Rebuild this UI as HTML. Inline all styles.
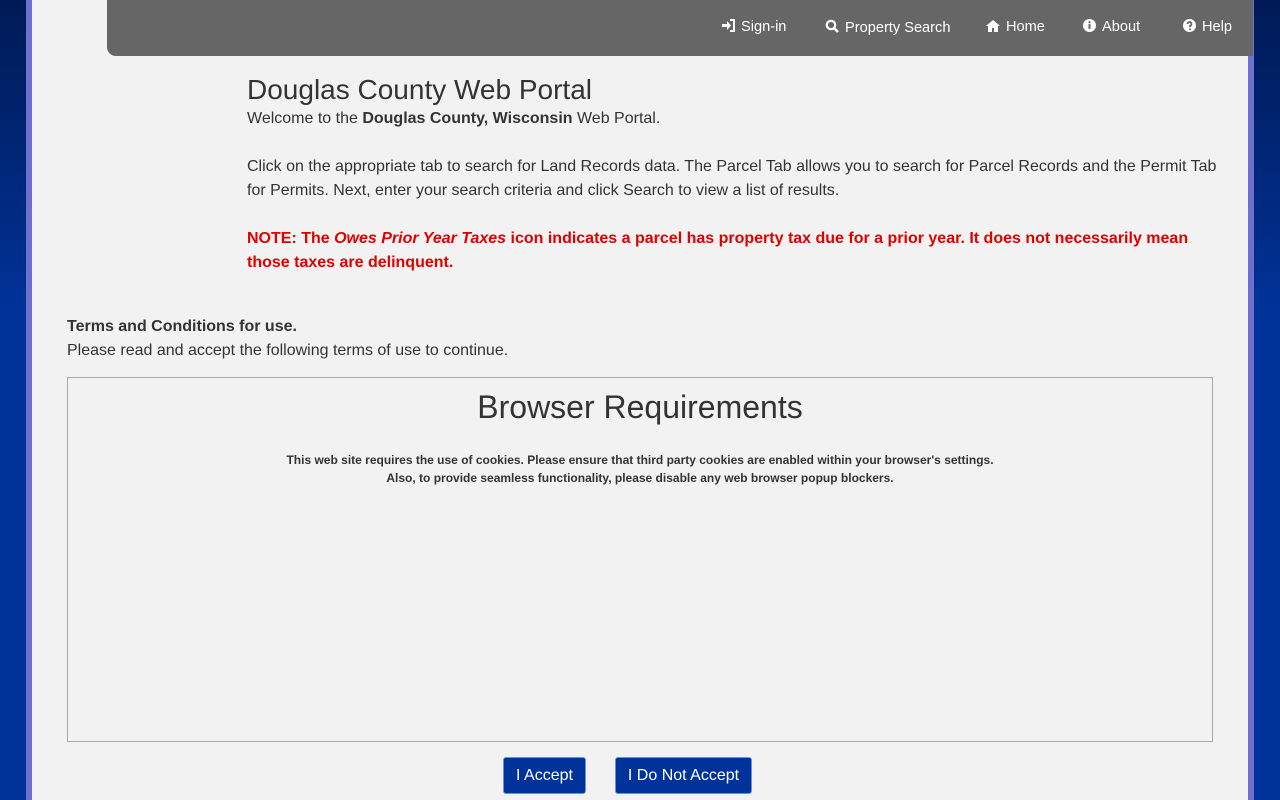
<!DOCTYPE html>
<html><head><style>
html,body{margin:0;padding:0;width:1280px;height:800px;overflow:hidden;font-family:"Liberation Sans",Arial,sans-serif;color:#333}
body{background:linear-gradient(#001a55 0%,#00339a 40%,#00339a 100%)}
.page{position:absolute;left:26px;top:0;width:1228px;height:800px;background:#f2f2f2;border-left:6px solid #6f6fd0;border-right:6px solid #6f6fd0;box-sizing:border-box}
.nav{position:absolute;left:107px;top:0;width:1146px;height:56px;background:#666;border-bottom-left-radius:9px}
.nav span{position:absolute;top:19px;color:#fff;font-size:14.6px;white-space:nowrap}
.nav svg{vertical-align:-1px;margin-right:6px}
h1{position:absolute;left:247px;top:74px;margin:0;font-size:28px;font-weight:normal;color:#333}
.p{position:absolute;left:247px;font-size:16px;line-height:24px;width:975px}
.red{color:#e00000;font-weight:bold}
.box{position:absolute;left:67px;top:377px;width:1146px;height:365px;border:1px solid #aaa;box-sizing:border-box;text-align:center}
.box h2{margin:11px 0 0;font-size:32px;font-weight:normal;color:#333}
.box div{font-size:12px;font-weight:bold;line-height:18px;margin-top:25px}
.btn{position:absolute;top:757px;height:37px;background:#003399;color:#fff;border:1px solid #6f8fd8;border-radius:3px;box-sizing:border-box;font-size:16px;line-height:35px;text-align:center}
</style></head><body>
<div class="page"></div>
<div class="nav">
<span style="left:615px"><svg width="13" height="13" viewBox="0 0 13 13"><path d="M0 5h5V2l4 4.5-4 4.5V8H0z" fill="#fff"/><path d="M8 1h4v11H8" stroke="#fff" stroke-width="2" fill="none"/></svg>Sign-in</span>
<span style="left:718px"><svg width="14" height="14" viewBox="0 0 14 14"><circle cx="6" cy="6" r="4.2" stroke="#fff" stroke-width="2.2" fill="none"/><path d="M9 9l4 4" stroke="#fff" stroke-width="2.6"/></svg>Property Search</span>
<span style="left:879px"><svg width="14" height="12" viewBox="0 0 14 12"><path d="M7 0L0 6h2v6h4V8h2v4h4V6h2z" fill="#fff"/></svg>Home</span>
<span style="left:976px"><svg width="13" height="13" viewBox="0 0 13 13"><circle cx="6.5" cy="6.5" r="6.5" fill="#fff"/><rect x="5.5" y="5" width="2" height="5" fill="#666"/><circle cx="6.5" cy="3.2" r="1.1" fill="#666"/></svg>About</span>
<span style="left:1076px"><svg width="13" height="13" viewBox="0 0 13 13"><circle cx="6.5" cy="6.5" r="6.5" fill="#fff"/><path d="M4.5 5a2 2 0 1 1 2.5 2v1.3" stroke="#666" stroke-width="1.8" fill="none"/><circle cx="7" cy="10.3" r="1" fill="#666"/></svg>Help</span>
</div>
<h1>Douglas County Web Portal</h1>
<div class="p" style="top:107px">Welcome to the <b>Douglas County, Wisconsin</b> Web Portal.</div>
<div class="p" style="top:155px">Click on the appropriate tab to search for Land Records data. The Parcel Tab allows you to search for Parcel Records and the Permit Tab for Permits. Next, enter your search criteria and click Search to view a list of results.</div>
<div class="p red" style="top:227px">NOTE: The <i>Owes Prior Year Taxes</i> icon indicates a parcel has property tax due for a prior year. It does not necessarily mean those taxes are delinquent.</div>
<div class="p" style="left:67px;top:315px"><b>Terms and Conditions for use.</b><br>Please read and accept the following terms of use to continue.</div>
<div class="box"><h2>Browser Requirements</h2><div>This web site requires the use of cookies. Please ensure that third party cookies are enabled within your browser's settings.<br>Also, to provide seamless functionality, please disable any web browser popup blockers.</div></div>
<div class="btn" style="left:503px;width:83px">I Accept</div>
<div class="btn" style="left:615px;width:137px">I Do Not Accept</div>
</body></html>
